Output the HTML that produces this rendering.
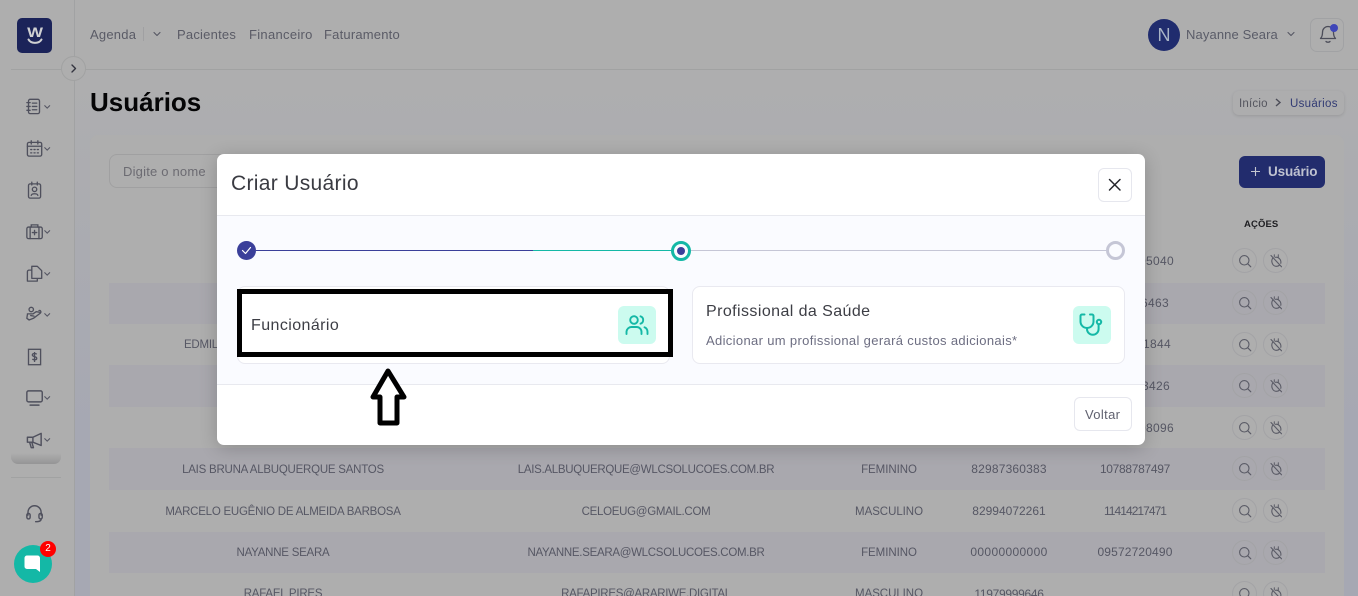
<!DOCTYPE html>
<html lang="pt-BR">
<head>
<meta charset="utf-8">
<title>Usuários</title>
<style>
*{box-sizing:border-box}
html{margin:0;padding:0;width:1358px;height:596px;overflow:hidden}
body{margin:0;padding:0;width:1358px;height:596px;overflow:hidden;position:relative;background:#aeaeae;font-family:"Liberation Sans",sans-serif;color:#555663}
.a{position:absolute;white-space:nowrap}
#main{position:absolute;left:75px;top:70px;width:1283px;height:526px;background:linear-gradient(#aeaeaf,#a6a8b3 70%)}
#card{position:absolute;left:90px;top:135px;width:1254px;height:461px;background:#aeaeae;border-radius:8px 8px 0 0}
.nav{font-size:13px;top:27px;line-height:15px;color:#5a5b66;letter-spacing:.22px}
.stripe{position:absolute;left:109px;width:1216px;background:#a9a8ae}
.c{position:absolute;font-size:12px;line-height:14px;white-space:nowrap;transform:translateX(-50%);color:#565764}
.name{left:283px;font-size:11.5px;letter-spacing:-.24px;margin-top:1px}
.mail{left:646px;font-size:11.5px;letter-spacing:-.29px;margin-top:1px}
.gen{left:889px;font-size:11.5px;letter-spacing:-.05px;margin-top:1px}
.tel{left:1009px;letter-spacing:.18px}
.cpf{left:1135px;letter-spacing:.18px}
.rt{position:absolute;font-size:12px;line-height:14px;white-space:nowrap;color:#565764;letter-spacing:.32px;text-align:right}
.ic{position:absolute;width:25px;height:25px;border:1px solid #a3a3a6;border-radius:50%}
.ic svg{position:absolute;left:4px;top:4px}
.side{position:absolute;left:23px;width:33px;height:22px}
#modal{position:absolute;left:217px;top:154px;width:928px;height:291px;background:#fff;border-radius:7px;box-shadow:0 3px 18px rgba(0,0,0,.2)}
#mbody{position:absolute;left:0;top:61px;width:928px;height:170px;background:#fafbff;border-top:1px solid #e8e9ef;border-bottom:1px solid #e8e9ef}
.opt{position:absolute;top:286px;height:78px;background:#fff;border:1px solid #e9e9f0;border-radius:8px}
.tile{position:absolute;top:306px;width:38px;height:38px;background:#ccfbef;border-radius:6px}
</style>
</head>
<body>
<svg width="0" height="0" style="position:absolute">
<defs>
<symbol id="sr" viewBox="0 0 16 16"><circle cx="7.3" cy="7.3" r="4.7" fill="none" stroke="#5a5b66" stroke-width="1.1"/><path d="M10.8 10.800L13.800 13.800" stroke="#5a5b66" stroke-width="1.100" fill="none" stroke-linecap="round"/></symbol>
<symbol id="bn" viewBox="0 0 16 16"><path d="M3 2.500L13.500 13.800M4.500 5.500C2.800 8.500 4.500 13 8 13.300c1.400.1 2.500-.3 3.400-1.100M7.500 4.300c3-.6 6 2.500 5.300 6" stroke="#5a5b66" stroke-width="1.100" fill="none" stroke-linecap="round" stroke-linejoin="round"/><path d="M6.300 1.800v2.200M10.300 1.800v2.200" stroke="#5a5b66" stroke-width="1" stroke-linecap="round"/></symbol>
<symbol id="cv" viewBox="0 0 8 8"><path d="M1 2.500L4 5.500L7 2.500" fill="none" stroke="#555663" stroke-width="1.100" stroke-linecap="round" stroke-linejoin="round"/></symbol>
</defs>
</svg>

<div id="main"></div>
<div id="card"></div>

<!-- sidebar / header lines -->
<div class="a" style="left:74px;top:0;width:1px;height:596px;background:#a1a2a3"></div>
<div class="a" style="left:11px;top:69px;width:1347px;height:1px;background:#a1a2a2"></div>

<!-- logo -->
<div class="a" style="left:17px;top:18px;width:35px;height:35px;border-radius:5px;background:#1b2359"></div>
<div class="a" style="left:26px;top:25px;font-size:14px;line-height:14px;font-weight:700;color:#cfd0d2;width:18px;text-align:center;transform:scaleX(1.2)">W</div>
<svg class="a" style="left:26px;top:38px" width="18" height="8"><path d="M2.500 1.500C5 6 13 6 15.500 1.500" fill="none" stroke="#cfd0d2" stroke-width="2" stroke-linecap="round"/></svg>

<!-- collapse toggle -->
<div class="a" style="left:61px;top:56px;width:25px;height:25px;border-radius:50%;background:#aeaeae;border:1px solid #a1a2a2"></div>
<svg class="a" style="left:69px;top:64px" width="9" height="9"><path d="M3 1L6.500 4.500L3 8" fill="none" stroke="#33343f" stroke-width="1.400" stroke-linecap="round" stroke-linejoin="round"/></svg>

<!-- nav -->
<div class="a nav" style="left:90px">Agenda</div>
<div class="a" style="left:143px;top:27px;width:1px;height:14px;background:#a0a0a2"></div>
<svg class="a" style="left:153px;top:30px" width="8" height="8"><use href="#cv"/></svg>
<div class="a nav" style="left:177px">Pacientes</div>
<div class="a nav" style="left:249px;letter-spacing:.3px">Financeiro</div>
<div class="a nav" style="left:324px;letter-spacing:.2px">Faturamento</div>

<!-- user -->
<div class="a" style="left:1148px;top:19px;width:32px;height:32px;border-radius:50%;background:#202c6e;color:#a9b4c6;font-size:18px;line-height:32px;text-align:center">N</div>
<div class="a nav" style="left:1186px;color:#5a5c68;letter-spacing:.12px">Nayanne Seara</div>
<svg class="a" style="left:1287px;top:30px" width="8" height="8"><use href="#cv"/></svg>
<div class="a" style="left:1310px;top:18px;width:34px;height:34px;border:1px solid #a1a2a4;border-radius:7px"></div>
<svg class="a" style="left:1318px;top:23px" width="20" height="22" viewBox="0 0 20 22"><path d="M2.500 15.500c1.500-1.500 2-3 2-6 0-3.500 2.300-6 5.500-6s5.500 2.500 5.500 6c0 3 .5 4.500 2 6z" fill="none" stroke="#4c4d59" stroke-width="1.300" stroke-linejoin="round"/><path d="M8 18.500c1 1 3 1 4 0" fill="none" stroke="#4c4d59" stroke-width="1.300" stroke-linecap="round"/></svg>
<div class="a" style="left:1330px;top:24px;width:8px;height:8px;border-radius:50%;background:#3f46b8"></div>

<!-- title & breadcrumb -->
<div class="a" style="left:90px;top:87px;font-size:26px;line-height:30px;font-weight:700;color:#050506">Usuários</div>
<div class="a" style="left:1233px;top:91px;width:111px;height:24px;border-radius:6px;background:#adadae;box-shadow:0 1px 3px rgba(0,0,0,.12)"></div>
<div class="a" style="left:1239px;top:97px;font-size:11.500px;line-height:14px;color:#55565f;letter-spacing:.2px">Início</div>
<svg class="a" style="left:1274px;top:98px" width="8" height="9"><path d="M2 1L6 4.500L2 8" fill="none" stroke="#4c4d58" stroke-width="1.400"/></svg>
<div class="a" style="left:1290px;top:97px;font-size:11.500px;line-height:14px;color:#323b74;letter-spacing:.3px">Usuários</div>

<!-- filter & button -->
<div class="a" style="left:109px;top:154px;width:130px;height:34px;border:1px solid #a0a0a1;border-radius:8px"></div>
<div class="a" style="left:123px;top:164px;font-size:13px;line-height:15px;color:#6c6b72;letter-spacing:.2px">Digite o nome</div>
<div class="a" style="left:1239px;top:156px;width:86px;height:32px;border-radius:6px;background:#222c6d"></div>
<svg class="a" style="left:1250px;top:166px" width="11" height="11"><path d="M5.500 1v9M1 5.500h9" stroke="#c4c6d0" stroke-width="1.100"/></svg>
<div class="a" style="left:1268px;top:164px;font-size:13.500px;line-height:15px;color:#bfc2d0;font-weight:700;letter-spacing:-.12px">Usuário</div>
<div class="a" style="left:1244px;top:219px;font-size:9.500px;line-height:11px;color:#1e1e22;font-weight:700;letter-spacing:.12px">AÇÕES</div>

<!-- stripes -->
<div class="stripe" style="top:283px;height:41px"></div>
<div class="stripe" style="top:365px;height:42px"></div>
<div class="stripe" style="top:448px;height:42px"></div>
<div class="stripe" style="top:532px;height:41px"></div>

<!-- table -->
<div class="c name" style="top:337px;left:184px;transform:none">EDMILSON SILVA DOS SANTOS</div>
<div class="rt" style="right:184px;top:254px">00000005040</div>
<div class="rt" style="right:189px;top:296px">00000006463</div>
<div class="rt" style="right:187px;top:337px">00000001844</div>
<div class="rt" style="right:188px;top:379px">00000003426</div>
<div class="rt" style="right:184px;top:421px">00000008096</div>

<div class="c name" style="top:462px">LAIS BRUNA ALBUQUERQUE SANTOS</div>
<div class="c mail" style="top:462px">LAIS.ALBUQUERQUE@WLCSOLUCOES.COM.BR</div>
<div class="c gen" style="top:462px">FEMININO</div>
<div class="c tel" style="top:462px">82987360383</div>
<div class="c cpf" style="top:462px;letter-spacing:-.3px">10788787497</div>

<div class="c name" style="top:504px">MARCELO EUGÊNIO DE ALMEIDA BARBOSA</div>
<div class="c mail" style="top:504px">CELOEUG@GMAIL.COM</div>
<div class="c gen" style="top:504px">MASCULINO</div>
<div class="c tel" style="top:504px;letter-spacing:0">82994072261</div>
<div class="c cpf" style="top:504px;letter-spacing:-.95px">11414217471</div>

<div class="c name" style="top:545px">NAYANNE SEARA</div>
<div class="c mail" style="top:545px">NAYANNE.SEARA@WLCSOLUCOES.COM.BR</div>
<div class="c gen" style="top:545px">FEMININO</div>
<div class="c tel" style="top:545px;letter-spacing:.35px">00000000000</div>
<div class="c cpf" style="top:545px;letter-spacing:.15px">09572720490</div>

<div class="c name" style="top:586px">RAFAEL PIRES</div>
<div class="c mail" style="top:586px">RAFAPIRES@ARARIWE.DIGITAL</div>
<div class="c gen" style="top:586px">MASCULINO</div>
<div class="c tel" style="top:587px;letter-spacing:-.3px">11979999646</div>

<!-- actions -->
<div class="ic" style="left:1232px;top:248px"><svg width="16" height="16"><use href="#sr"/></svg></div><div class="ic" style="left:1263px;top:248px"><svg width="16" height="16"><use href="#bn"/></svg></div>
<div class="ic" style="left:1232px;top:290px"><svg width="16" height="16"><use href="#sr"/></svg></div><div class="ic" style="left:1263px;top:290px"><svg width="16" height="16"><use href="#bn"/></svg></div>
<div class="ic" style="left:1232px;top:332px"><svg width="16" height="16"><use href="#sr"/></svg></div><div class="ic" style="left:1263px;top:332px"><svg width="16" height="16"><use href="#bn"/></svg></div>
<div class="ic" style="left:1232px;top:373px"><svg width="16" height="16"><use href="#sr"/></svg></div><div class="ic" style="left:1263px;top:373px"><svg width="16" height="16"><use href="#bn"/></svg></div>
<div class="ic" style="left:1232px;top:415px"><svg width="16" height="16"><use href="#sr"/></svg></div><div class="ic" style="left:1263px;top:415px"><svg width="16" height="16"><use href="#bn"/></svg></div>
<div class="ic" style="left:1232px;top:456px"><svg width="16" height="16"><use href="#sr"/></svg></div><div class="ic" style="left:1263px;top:456px"><svg width="16" height="16"><use href="#bn"/></svg></div>
<div class="ic" style="left:1232px;top:498px"><svg width="16" height="16"><use href="#sr"/></svg></div><div class="ic" style="left:1263px;top:498px"><svg width="16" height="16"><use href="#bn"/></svg></div>
<div class="ic" style="left:1232px;top:540px"><svg width="16" height="16"><use href="#sr"/></svg></div><div class="ic" style="left:1263px;top:540px"><svg width="16" height="16"><use href="#bn"/></svg></div>
<div class="ic" style="left:1232px;top:581px"><svg width="16" height="16"><use href="#sr"/></svg></div><div class="ic" style="left:1263px;top:581px"><svg width="16" height="16"><use href="#bn"/></svg></div>

<!-- sidebar icons -->
<svg class="side" style="top:96px" viewBox="0 0 30 20"><g fill="none" stroke="#4f505d" stroke-width="1.200" stroke-linecap="round"><rect x="5" y="3" width="10" height="13" rx="1.500"/><path d="M3.500 6h3M3.500 9.500h3M3.500 13h3M8.500 6.500h4M8.500 9.500h4M8.500 12.500h4"/></g><path d="M19.500 8.500l2.500 2.500L24.500 8.500" fill="none" stroke="#555663" stroke-width="1"/></svg>
<svg class="side" style="top:138px" viewBox="0 0 30 20"><g fill="none" stroke="#4f505d" stroke-width="1.200" stroke-linecap="round"><rect x="4" y="4" width="13" height="12.500" rx="1.500"/><path d="M4 7.500h13M7.500 2.500v3M13.500 2.500v3M7 10.500h1M10 10.500h1M13 10.500h1M7 13.500h1M10 13.500h1M13 13.500h1"/></g><path d="M19.500 8.500l2.500 2.500L24.500 8.500" fill="none" stroke="#555663" stroke-width="1"/></svg>
<svg class="side" style="top:180px" viewBox="0 0 30 20"><g fill="none" stroke="#4f505d" stroke-width="1.200" stroke-linecap="round"><rect x="5" y="3.500" width="11" height="13" rx="1.500"/><circle cx="10.500" cy="8.500" r="2"/><path d="M7.500 14c.5-2 5.500-2 6 0M8 2v2.500M13 2v2.500"/></g></svg>
<svg class="side" style="top:221px" viewBox="0 0 30 20"><g fill="none" stroke="#4f505d" stroke-width="1.200" stroke-linecap="round"><rect x="3.500" y="5.500" width="14" height="10.500" rx="1.500"/><path d="M7.500 5.500v-2h6v2M6.500 5.500V16M14.500 5.500V16M10.500 8.500v4M8.500 10.500h4"/></g><path d="M19.500 8.500l2.500 2.500L24.500 8.500" fill="none" stroke="#555663" stroke-width="1"/></svg>
<svg class="side" style="top:263px" viewBox="0 0 30 20"><g fill="none" stroke="#4f505d" stroke-width="1.200" stroke-linejoin="round"><path d="M8 3h5l4 4v7H8z"/><path d="M8 6.500H5.500A1.500 1.500 0 0 0 4 8v8.500h9V14"/></g><path d="M19.500 8.500l2.500 2.500L24.500 8.500" fill="none" stroke="#555663" stroke-width="1"/></svg>
<svg class="side" style="top:304px" viewBox="0 0 30 20"><g fill="none" stroke="#4f505d" stroke-width="1.200" stroke-linecap="round" stroke-linejoin="round"><circle cx="7.500" cy="5" r="2"/><path d="M4 9l5 0 3-2 3 .5M4 9.500l-.5 3.500 2 1.500 4-1.500 6-4.500c1.500-1.300.5-3-1-2.500M7 10.500l3 .5"/></g><path d="M19.500 8.500l2.500 2.500L24.500 8.500" fill="none" stroke="#555663" stroke-width="1"/></svg>
<svg class="side" style="top:346px" viewBox="0 0 30 20"><g fill="none" stroke="#4f505d" stroke-width="1.200"><rect x="5" y="3" width="11" height="14"/><path d="M12.500 7.500c-1-1-4-1-4 .7 0 2 4 1 4 3 0 1.600-3 1.600-4 .6M10.500 5.500v9"/></g></svg>
<svg class="side" style="top:387px" viewBox="0 0 30 20"><g fill="none" stroke="#4f505d" stroke-width="1.300" stroke-linecap="round"><rect x="3.500" y="3.500" width="14" height="10" rx="1.500"/><path d="M6.500 16.500h8"/></g><path d="M19.500 8.500l2.500 2.500L24.500 8.500" fill="none" stroke="#555663" stroke-width="1"/></svg>
<svg class="side" style="top:429px" viewBox="0 0 30 20"><g fill="none" stroke="#4f505d" stroke-width="1.300" stroke-linejoin="round" stroke-linecap="round"><path d="M4 7.500h5L16.500 4v11L9 12H4z"/><path d="M9 7.500V12M6 12l1.500 5h2L8 12"/></g><path d="M19.500 8.500l2.500 2.500L24.500 8.500" fill="none" stroke="#555663" stroke-width="1"/></svg>
<div class="a" style="left:11px;top:453px;width:50px;height:11px;border-radius:0 0 7px 7px;background:linear-gradient(#aeaeae,#959596)"></div>
<div class="a" style="left:11px;top:477px;width:50px;height:1px;background:#a1a2a2"></div>
<svg class="side" style="top:503px" viewBox="0 0 30 20"><g fill="none" stroke="#4f505d" stroke-width="1.300" stroke-linecap="round"><path d="M4.500 11V8.500a6 6 0 0 1 12 0V11"/><rect x="3.500" y="9.500" width="3" height="5" rx="1.500"/><rect x="14.500" y="9.500" width="3" height="5" rx="1.500"/><path d="M16.500 14.500c0 2-2 2.500-5 2.500"/></g></svg>

<!-- chat -->
<div class="a" style="left:14px;top:545px;width:38px;height:38px;border-radius:50%;background:#14b8a6"></div>
<svg class="a" style="left:23px;top:554px" width="20" height="20"><path d="M4 1.500h10.500a2.500 2.500 0 0 1 2.500 2.500v14l-4-3H4a2.500 2.500 0 0 1-2.500-2.500V4A2.500 2.500 0 0 1 4 1.500z" fill="#fff"/></svg>
<div class="a" style="left:40px;top:541px;width:16px;height:16px;border-radius:50%;background:#f00;color:#fff;font-size:10px;line-height:16px;text-align:center">2</div>

<!-- modal -->
<div id="modal"><div id="mbody"></div></div>
<div class="a" style="left:231px;top:172px;font-size:21px;line-height:24px;color:#3a3b42;letter-spacing:.32px">Criar Usuário</div>
<div class="a" style="left:1098px;top:168px;width:34px;height:34px;border:1px solid #e6e7ee;border-radius:6px"></div>
<svg class="a" style="left:1107px;top:177px" width="16" height="16"><path d="M2.500 2.500l10.500 10.500M13 2.500L2.500 13" stroke="#24252b" stroke-width="1.500" stroke-linecap="round"/></svg>

<!-- stepper -->
<div class="a" style="left:256px;top:250px;width:277px;height:1px;background:#3a3f9a"></div>
<div class="a" style="left:533px;top:250px;width:140px;height:1px;background:#14b8a6"></div>
<div class="a" style="left:690px;top:250px;width:418px;height:1px;background:#c5c6d6"></div>
<div class="a" style="left:237px;top:241px;width:19px;height:19px;border-radius:50%;background:#3a3f9a"></div>
<svg class="a" style="left:241px;top:245px" width="11" height="11"><path d="M1.500 5.500L4.500 8.500L9.500 2.500" fill="none" stroke="#fff" stroke-width="1.200" stroke-linecap="round" stroke-linejoin="round"/></svg>
<div class="a" style="left:671px;top:241px;width:20px;height:20px;border-radius:50%;border:3px solid #14b8a6;background:#fafbff"></div>
<div class="a" style="left:677px;top:247px;width:8px;height:8px;border-radius:50%;background:#3a3f9a"></div>
<div class="a" style="left:1106px;top:241px;width:19px;height:19px;border-radius:50%;border:3px solid #c5c6d6;background:#fafbff"></div>

<!-- options -->
<div class="opt" style="left:237px;width:433px"></div>
<div class="a" style="left:237px;top:289px;width:436px;height:68px;border:5px solid #000;background:#fff"></div>
<div class="a" style="left:251px;top:317px;font-size:16px;line-height:18px;color:#3d3e45;letter-spacing:.42px">Funcionário</div>
<div class="tile" style="left:618px"></div>
<svg class="a" style="left:625px;top:313px" width="24" height="24" viewBox="0 0 24 24"><g fill="none" stroke="#14b8a6" stroke-width="1.900" stroke-linecap="round"><circle cx="9" cy="7" r="3.800"/><path d="M1.500 21v-2.500A5 5 0 0 1 6.500 14h5a5 5 0 0 1 5 5v2"/><path d="M15.500 3.300a3.900 3.900 0 0 1 0 7.400M19.500 14.300c1.800.8 3 2.500 3 4.600V21"/></g></svg>

<div class="opt" style="left:692px;width:433px"></div>
<div class="a" style="left:706px;top:303px;font-size:16px;line-height:18px;color:#3d3e45;letter-spacing:.42px">Profissional da Saúde</div>
<div class="a" style="left:706px;top:333px;font-size:13px;line-height:15px;color:#6d6e82;letter-spacing:.34px">Adicionar um profissional gerará custos adicionais*</div>
<div class="tile" style="left:1073px"></div>
<svg class="a" style="left:1079px;top:313px" width="26" height="24" viewBox="0 0 26 24"><g fill="none" stroke="#14b8a6" stroke-width="2" stroke-linecap="round" stroke-linejoin="round"><path d="M5.500 1.500H3A1.500 1.500 0 0 0 1.500 3v5.500a6.500 6.500 0 0 0 13 0V3A1.500 1.500 0 0 0 13 1.500H11"/><path d="M8 15v1a5.800 5.800 0 0 0 11.600 0V11.500"/><circle cx="20" cy="9" r="2.200"/></g></svg>

<!-- footer -->
<div class="a" style="left:1074px;top:397px;width:58px;height:34px;border:1px solid #e6e7ee;border-radius:6px"></div>
<div class="a" style="left:1085px;top:407px;font-size:13px;line-height:15px;color:#60616f;letter-spacing:.35px">Voltar</div>

<!-- arrow -->
<svg class="a" style="left:365px;top:362px" width="46" height="68"><path d="M23 9L8 35H15V61H32V35H39Z" fill="#fff" stroke="#000" stroke-width="5" stroke-linejoin="round"/></svg>
</body>
</html>
